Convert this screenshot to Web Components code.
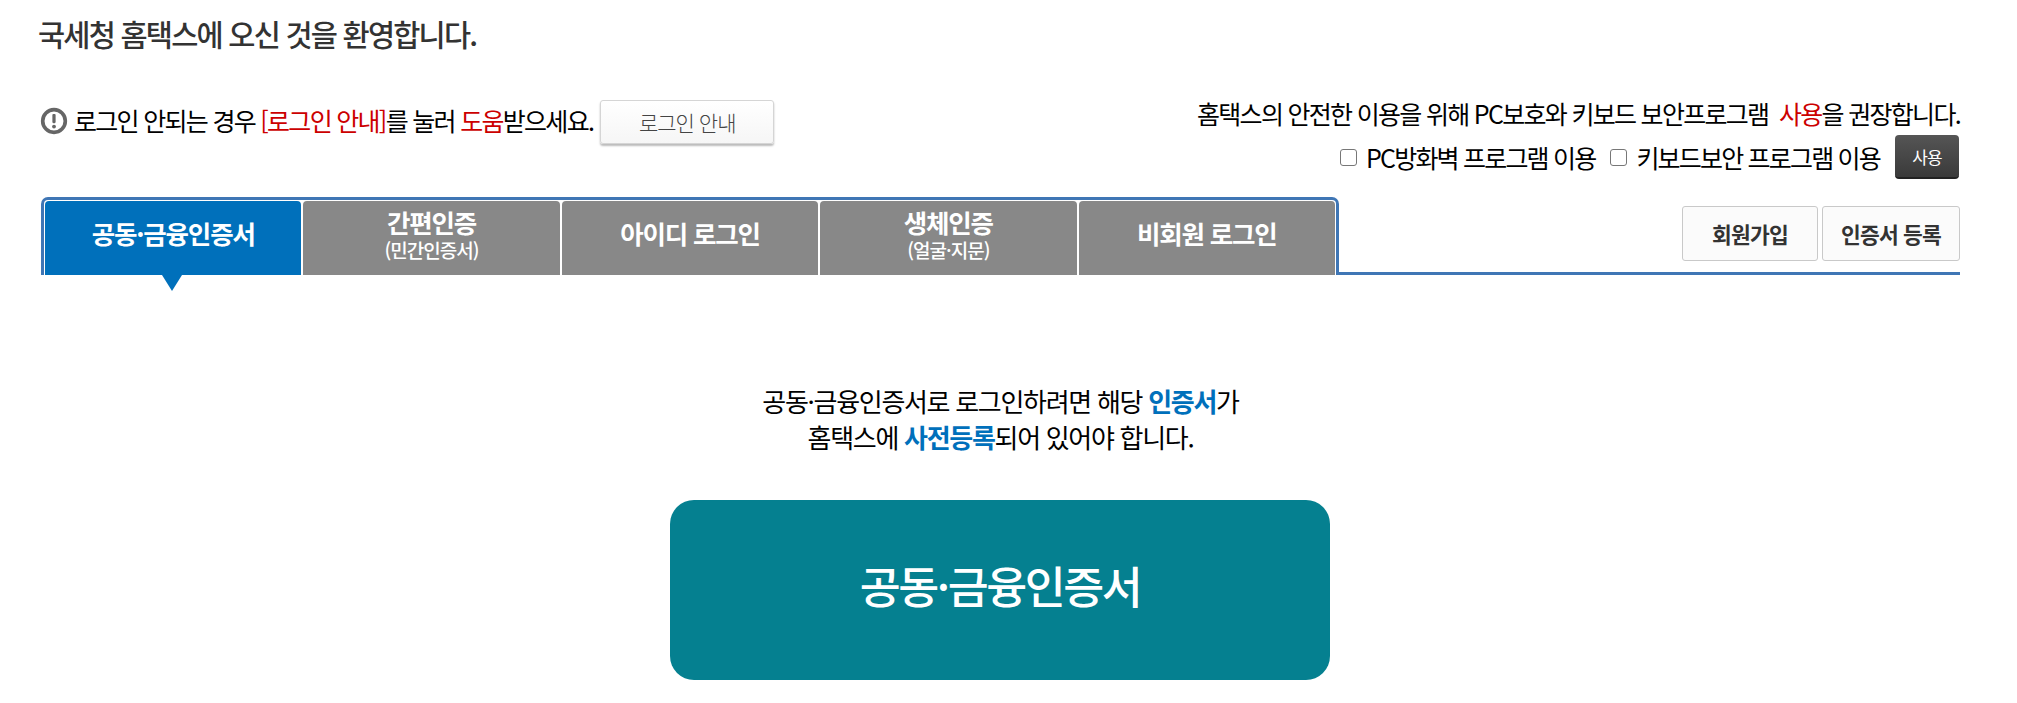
<!DOCTYPE html>
<html lang="ko"><head><meta charset="utf-8"><title>홈택스 로그인</title>
<style>
html,body{margin:0;background:#fff}
body{font-family:"Noto Sans CJK KR","Noto Sans",sans-serif;color:#000}
</style></head><body>
<login-page></login-page>
<script>
const FONT='"Noto Sans CJK KR","Noto Sans",sans-serif';
class HtTab extends HTMLElement{
  connectedCallback(){
    const r=this.attachShadow({mode:'open'});
    r.innerHTML=`<style>
    :host{display:flex;flex-direction:column;align-items:center;justify-content:center;box-sizing:border-box;width:256.4px;height:74px;background:#888;color:#fff;border-radius:4px 4px 0 0;position:relative;font-weight:700;font-size:25.5px;letter-spacing:-1.2px;line-height:30px;padding-bottom:10px}
    :host([sub]){padding-bottom:6px}
    :host([active]){background:#0070bb}
    :host([active])::after{content:"";position:absolute;left:50%;margin-left:-11px;top:100%;border:10px solid transparent;border-top:16px solid #0070bb;border-bottom:0}
    ::slotted([slot=sub]){font-size:19px;line-height:26px;letter-spacing:-1px;font-weight:500}
    </style><slot></slot><slot name="sub"></slot>`;
  }
}
customElements.define('ht-tab',HtTab);
class HtBtn extends HTMLElement{
  connectedCallback(){
    const r=this.attachShadow({mode:'open'});
    r.innerHTML=`<style>
    :host{display:inline-flex;align-items:center;justify-content:center;box-sizing:border-box;border:1px solid #ccc;border-radius:3px;background:#fbfbfb;color:#333;font-size:21.5px;letter-spacing:-.8px}
    :host([kind=light]){width:174px;height:44px;background:linear-gradient(#fff,#f6f6f6);color:#444;border-color:#d5d5d5;box-shadow:0 2px 2px #bbb;font-size:21px;font-weight:300;letter-spacing:-1px}
    :host([kind=dark]){width:64px;height:44px;background:linear-gradient(#555,#3a3a3a);color:#fff;border:0;border-bottom:2px solid #222;border-radius:4px;font-size:17px;font-weight:400}
    :host([kind=side]){width:138px;height:55px;font-weight:700;border-color:#c9c9c9}
    </style><slot></slot>`;
  }
}
customElements.define('ht-btn',HtBtn);
class LoginPage extends HTMLElement{
  connectedCallback(){
    const r=this.attachShadow({mode:'open'});
    r.innerHTML=`<style>
    :host{display:block;box-sizing:border-box;width:2017px;height:703px;overflow:hidden;padding:0 57px 0 41px;font-family:${FONT};color:#000}
    h1{margin:0 0 0 -3px;height:100px;padding-top:13px;box-sizing:border-box;font-size:29.5px;line-height:40px;font-weight:500;letter-spacing:-1.8px;color:#333}
    .notice{display:flex;justify-content:space-between;height:97px;font-size:25px;letter-spacing:-1.7px}
    .left{display:flex;align-items:center;height:44px;gap:0}
    .left svg{margin:-2px 6px 0 -1px;flex:none}
    .left span.txt{margin-right:7px;margin-top:-5px}
    .red{color:#c00}
    .right{display:flex;flex-direction:column;align-items:flex-end;margin-top:-2px}
    .l1{height:33px;line-height:30px}
    .l2{display:flex;align-items:center;height:44px;margin-top:4px;margin-right:1px;letter-spacing:-1.8px}
    .l2 span.t{margin-right:15px;margin-top:-1px}
    .chk{width:17px;height:17px;box-sizing:border-box;border:1px solid #777;border-radius:3px;background:#fff;margin-right:9px}
    .tabsrow{display:flex;height:78px;position:relative}
    .frame{display:flex;gap:2px;box-sizing:border-box;height:78px;border:3px solid #3f76b5;border-bottom:0;border-radius:7px 7px 0 0;padding:1px 1px 0 1px}
    .rest{flex:1;display:flex;justify-content:flex-end;gap:4px;border-bottom:3px solid #3f76b5;box-sizing:border-box;height:78px;padding-top:9px}
    .rest ht-btn:first-child{width:136px}
    .msg{margin:108px 0 0;text-align:center;font-size:26px;line-height:36px;letter-spacing:-1.3px}
    .msg b{color:#0070bb;font-weight:700}
    .cert{display:flex;align-items:center;justify-content:center;box-sizing:border-box;width:660px;height:180px;margin:45px 0 0 629px;padding-bottom:12px;background:#058090;color:#fff;border-radius:24px;font-size:44.5px;font-weight:500;letter-spacing:-2.4px}
    </style>
    <h1>국세청 홈택스에 오신 것을 환영합니다.</h1>
    <div class="notice">
      <div class="left">
        <svg width="28" height="28" viewBox="0 0 26 26"><circle cx="13" cy="13" r="10.5" fill="#fff" stroke="#666" stroke-width="3.4"/><rect x="11.5" y="6.5" width="3" height="8.5" rx="1" fill="#666"/><circle cx="13" cy="18.2" r="1.8" fill="#666"/></svg>
        <span class="txt">로그인 안되는 경우 <span class="red">[로그인 안내]</span>를 눌러 <span class="red">도움</span>받으세요.</span>
        <ht-btn kind="light">로그인 안내</ht-btn>
      </div>
      <div class="right">
        <div class="l1">홈택스의 안전한 이용을 위해 PC보호와 키보드 보안프로그램 &nbsp;<span class="red">사용</span>을 권장합니다.</div>
        <div class="l2"><span class="chk"></span><span class="t">PC방화벽 프로그램 이용</span><span class="chk"></span><span class="t">키보드보안 프로그램 이용</span><ht-btn kind="dark">사용</ht-btn></div>
      </div>
    </div>
    <div class="tabsrow">
      <div class="frame">
        <ht-tab active>공동·금융인증서</ht-tab>
        <ht-tab sub>간편인증<span slot="sub">(민간인증서)</span></ht-tab>
        <ht-tab>아이디 로그인</ht-tab>
        <ht-tab sub>생체인증<span slot="sub">(얼굴·지문)</span></ht-tab>
        <ht-tab>비회원 로그인</ht-tab>
      </div>
      <div class="rest"><ht-btn kind="side">회원가입</ht-btn><ht-btn kind="side">인증서 등록</ht-btn></div>
    </div>
    <p class="msg">공동·금융인증서로 로그인하려면 해당 <b>인증서</b>가<br>홈택스에 <b>사전등록</b>되어 있어야 합니다.</p>
    <div class="cert">공동·금융인증서</div>`;
  }
}
customElements.define('login-page',LoginPage);
</script>
</body></html>
